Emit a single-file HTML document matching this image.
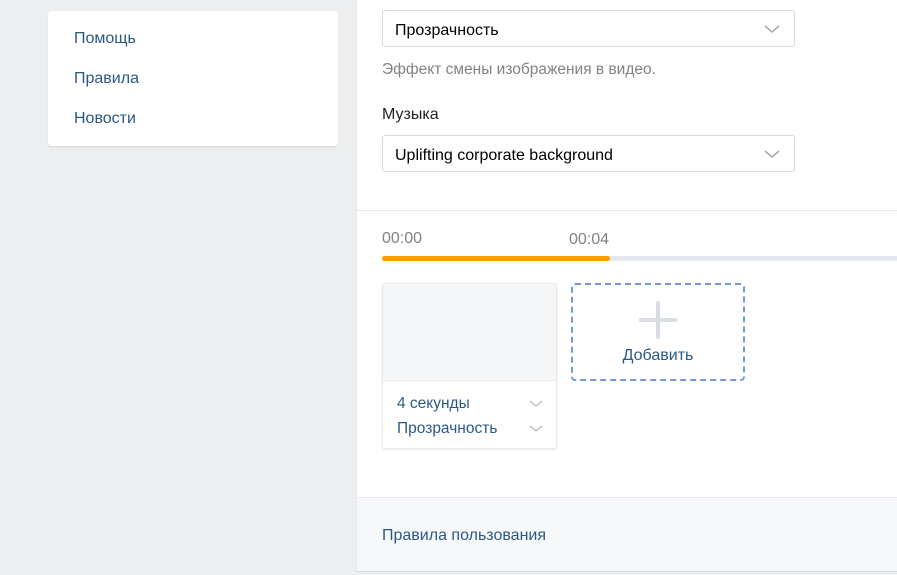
<!DOCTYPE html><html><head><meta charset="utf-8"><style>
*{box-sizing:border-box;margin:0;padding:0}
body{width:897px;height:575px;background:#edeef0;font-family:"Liberation Sans",sans-serif;position:relative;overflow:hidden;font-size:16px}
.abs{position:absolute}
.menu{left:48px;top:11px;width:290px;height:135px;background:#fff;border-radius:3px;box-shadow:0 1px 1px #d7d8db}
.menu div{position:absolute;left:26px;color:#2a5885;font-size:16px}
.main{left:356px;top:0;width:541px;height:571px;background:#fff;border-left:1px solid #e7e8ec;box-shadow:0 1px 0 #d7d8db}
.sel{left:25px;width:413px;height:37px;border:1px solid #d3d9de;border-radius:3px;color:#000;padding:11px 12px 0;font-size:16px}
.sel svg{position:absolute;right:14px;top:13px}
</style></head><body>
<div class="abs menu"><div style="top:19px">Помощь</div><div style="top:59px">Правила</div><div style="top:99px">Новости</div></div>
<div class="abs main">
<div class="abs sel" style="top:10px">Прозрачность<svg width="16" height="10"><path d="M1 2l7 6 7-6" fill="none" stroke="#a4aab2" stroke-width="1.5"/></svg></div>
<div class="abs" style="left:25px;top:61px;color:#828282;font-size:15.5px">Эффект смены изображения в видео.</div>
<div class="abs" style="left:25px;top:106px;color:#222;font-size:16px">Музыка</div>
<div class="abs sel" style="top:135px">Uplifting corporate background<svg width="16" height="10"><path d="M1 2l7 6 7-6" fill="none" stroke="#a4aab2" stroke-width="1.5"/></svg></div>
<div class="abs" style="left:0;top:210px;width:541px;height:1px;background:#e7e8ec"></div>
<div class="abs" style="left:25px;top:230px;color:#828282;font-size:16px">00:00</div>
<div class="abs" style="left:212px;top:231px;color:#828282;font-size:16px">00:04</div>
<div class="abs" style="left:25px;top:256px;width:516px;height:5px;background:#e5e8ec"></div>
<div class="abs" style="left:25px;top:256px;width:228px;height:5px;background:#ffa000;border-radius:3px"></div>
<div class="abs" style="left:25px;top:283px;width:175px;height:166px;border:1px solid #e7e8ec;border-radius:3px;box-shadow:0 1px 2px #e7e8ec;overflow:hidden">
<div style="height:97px;background:#f5f6f8;border-bottom:1px solid #e7e8ec"></div>
<div class="abs" style="left:14px;top:111px;color:#2a5885;font-size:15.5px">4 секунды</div>
<div class="abs" style="left:14px;top:136px;color:#2a5885;font-size:15.5px">Прозрачность</div>
<svg class="abs" style="left:146px;top:116px" width="14" height="8"><path d="M1 1l6 5 6-5" fill="none" stroke="#b8bcc2" stroke-width="1.2"/></svg>
<svg class="abs" style="left:146px;top:141px" width="14" height="8"><path d="M1 1l6 5 6-5" fill="none" stroke="#b8bcc2" stroke-width="1.2"/></svg>
</div>
<div class="abs" style="left:214px;top:283px;width:174px;height:98px;border:2px dashed #6f9bdc;border-radius:4px">
<div class="abs" style="left:66px;top:33px;width:38px;height:4px;background:#d8dde4;border-radius:2px"></div>
<div class="abs" style="left:83px;top:16px;width:4px;height:38px;background:#d8dde4;border-radius:2px"></div>
<div class="abs" style="left:0;width:170px;text-align:center;top:62px;color:#2a5885;font-size:16px">Добавить</div>
</div>
<div class="abs" style="left:0;top:497px;width:541px;height:74px;background:#f7f8fa;border-top:1px solid #e7e8ec">
<div class="abs" style="left:25px;top:29px;color:#2a5885;font-size:16px">Правила пользования</div></div>
</div>
</body></html>
